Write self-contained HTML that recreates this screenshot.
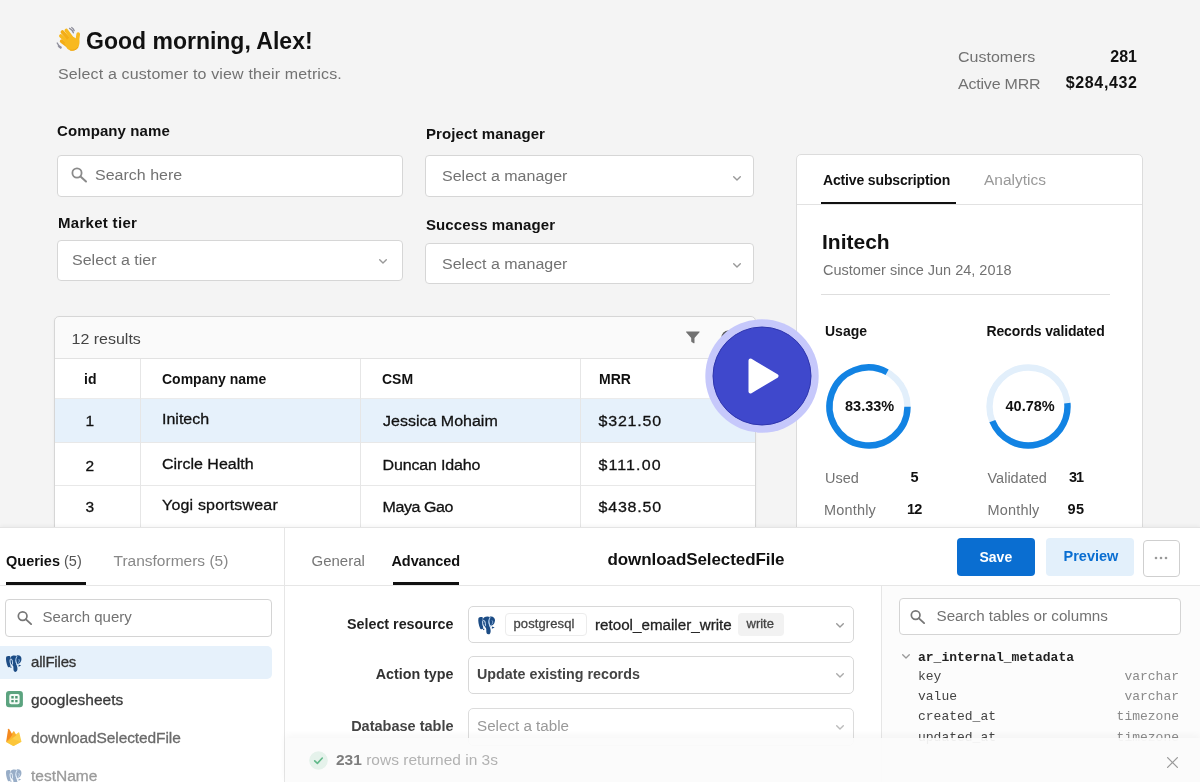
<!DOCTYPE html>
<html lang="en">
<head>
<meta charset="utf-8">
<title>Dashboard</title>
<style>
*{box-sizing:border-box;margin:0;padding:0}
html,body{width:1200px;height:782px;overflow:hidden}
body{background:#f4f4f4;font-family:"Liberation Sans",sans-serif;color:#111;position:relative}
/* .a : absolutely placed text, "top" is the BASELINE y */
.a{position:absolute;white-space:nowrap;line-height:1;margin-top:-.8465em;font-size:16px}
.a:not(.b):not(.m){transform:scaleY(.96);transform-origin:0 .8465em}
.a.tc{transform:scaleY(.87)}
.a.s93{transform:scaleY(.93)}
.b{font-weight:bold}
.g{color:#727272}
.md{-webkit-text-stroke:.3px currentColor}
.m{font-family:"Liberation Mono",monospace;font-size:13px;margin-top:-.7665em}
.box{position:absolute;background:#fff;border:1px solid #d6d6d6;border-radius:4px}
.ln{position:absolute;background:#e4e4e4}
svg{position:absolute;overflow:visible}
</style>
</head>
<body>
<div id="root" style="position:absolute;left:0;top:0;width:1200px;height:782px;will-change:transform">

<!-- ============ HEADER ============ -->
<svg id="wave" aria-label="waving hand" style="left:50px;top:22px" width="40" height="34" viewBox="0 0 40 34">
  <g stroke-linecap="round" fill="none" stroke-width="3.700">
    <path d="M11.700 19.200L18 24" stroke="#f3ad16"/>
    <path d="M10.900 14L19 21.500" stroke="#f8b91f"/>
    <path d="M12.400 10L21 19.500" stroke="#f3ad16"/>
    <path d="M16.300 8.500L23 17.500" stroke="#f8b91f"/>
    <path d="M28.200 12.200L27 21" stroke="#f8b91f"/>
  </g>
  <path d="M14.500 21.500C17 16 22 13.500 24.500 15.500c1.500 1.200 2.500 1 4 .5 1.500 2.500 1.500 7-1 10.500-3 3-7.500 2.600-10.200.2Z" fill="#f8b91f"/>
  <path d="M20.500 28.200c3 .6 6-.6 7.500-3" stroke="#eea512" stroke-width="1" fill="none" stroke-linecap="round"/>
  <g stroke="#8f8f9c" stroke-width="1.300" fill="none" stroke-linecap="round">
    <path d="M19.600 6.400c1.900 1 3.200 2.500 3.800 4.400M21.700 5.500c1.300.8 2.100 1.900 2.500 3.200"/>
    <path d="M7.200 21c.8 2 2.200 3.400 4.100 4.300M8.300 24c.6 1 1.400 1.700 2.500 2.200"/>
  </g>
</svg>
<div class="a b" id="title" style="left:86px;top:49.300px;font-size:23px">Good morning, Alex!</div>
<div class="a g s93" id="sub" style="left:58px;top:79.500px;letter-spacing:.14px">Select a customer to view their metrics.</div>

<div class="a g" id="cust" style="left:958px;top:63px">Customers</div>
<div class="a b" id="custv" style="right:63px;top:62.500px">281</div>
<div class="a g" id="mrr" style="left:958px;top:89.500px;letter-spacing:-.2px">Active MRR</div>
<div class="a b" id="mrrv" style="right:63px;top:89px;letter-spacing:.65px;margin-right:-.65px">$284,432</div>

<!-- ============ FILTERS ============ -->
<div class="a b" id="l1" style="left:57px;top:136px;font-size:15px;letter-spacing:.1px">Company name</div>
<div class="box" style="left:56.500px;top:155px;width:346px;height:41.500px"></div>
<svg style="left:71px;top:167px" width="17" height="16" viewBox="0 0 17 16"><circle cx="6" cy="6" r="4.600" fill="none" stroke="#8a8a8a" stroke-width="1.800"/><path d="M9.500 9.500L15 14.500" stroke="#8a8a8a" stroke-width="2" stroke-linecap="round"/></svg>
<div class="a g" id="p1" style="left:95px;top:180.500px">Search here</div>

<div class="a b" id="l2" style="left:58px;top:227.500px;font-size:15px;letter-spacing:.3px">Market tier</div>
<div class="box" style="left:56.500px;top:239.500px;width:346px;height:41px"></div>
<div class="a g" id="p2" style="left:72px;top:265.500px">Select a tier</div>
<svg class="chev" style="left:379px;top:259px" width="8" height="5" viewBox="0 0 8 5"><path d="M.7.7L4 4 7.300.7" fill="none" stroke="#999" stroke-width="1.400" stroke-linecap="round" stroke-linejoin="round"/></svg>

<div class="a b" id="l3" style="left:426px;top:139px;font-size:15px;letter-spacing:.1px">Project manager</div>
<div class="box" style="left:424.500px;top:155px;width:329px;height:41.500px"></div>
<div class="a g" id="p3" style="left:442px;top:182px">Select a manager</div>
<svg class="chev" style="left:733px;top:176px" width="8" height="5" viewBox="0 0 8 5"><path d="M.7.7L4 4 7.300.7" fill="none" stroke="#999" stroke-width="1.400" stroke-linecap="round" stroke-linejoin="round"/></svg>

<div class="a b" id="l4" style="left:426px;top:230px;font-size:15px;letter-spacing:.1px">Success manager</div>
<div class="box" style="left:424.500px;top:243px;width:329px;height:41px"></div>
<div class="a g" id="p4" style="left:442px;top:269.500px">Select a manager</div>
<svg class="chev" style="left:733px;top:263px" width="8" height="5" viewBox="0 0 8 5"><path d="M.7.7L4 4 7.300.7" fill="none" stroke="#999" stroke-width="1.400" stroke-linecap="round" stroke-linejoin="round"/></svg>

<!-- ============ TABLE ============ -->
<div class="box" id="tbl" style="left:54px;top:316px;width:702px;height:240px;background:#fafafa;border-color:#d6d6d6;border-radius:5px 5px 0 0;box-shadow:0 1px 3px rgba(0,0,0,.05)"></div>
<div id="tbody" style="position:absolute;left:55px;top:359px;width:700px;height:190px;background:#fff"></div>
<div id="rowsel" style="position:absolute;left:55px;top:399px;width:700px;height:43px;background:#e6f1fb"></div>
<div class="ln" style="left:55px;top:358px;width:700px;height:1px;background:#e2e2e2"></div>
<div class="ln" style="left:55px;top:398px;width:700px;height:1px;background:#ebebeb"></div>
<div class="ln" style="left:55px;top:442px;width:700px;height:1px;background:#e8e8e8"></div>
<div class="ln" style="left:55px;top:485px;width:700px;height:1px;background:#e8e8e8"></div>
<div class="ln" style="left:139.500px;top:359px;width:1px;height:180px;background:#e6e6e6"></div>
<div class="ln" style="left:360px;top:359px;width:1px;height:180px;background:#e6e6e6"></div>
<div class="ln" style="left:579.500px;top:359px;width:1px;height:180px;background:#e6e6e6"></div>

<div class="a" id="res" style="left:71.500px;top:344.500px;color:#444">12 results</div>
<svg id="filt" style="left:685.700px;top:330.800px" width="13.700" height="13.700" viewBox="0 0 15 15"><path d="M.6.5h13.800c.5 0 .7.500.4.900L9.300 7.600v5.300c0 .5-.5.800-.9.500L6.100 12a.8.800 0 0 1-.4-.7V7.600L.2 1.400C-.1 1 .1.500.6.500Z" fill="#727272"/></svg>
<svg id="dl" style="left:720.500px;top:330px" width="14.500" height="14.500" viewBox="0 0 16 16"><circle cx="8" cy="8" r="7.500" fill="#555"/></svg>

<div class="a b" id="h1" style="left:84px;top:383.500px;font-size:14px">id</div>
<div class="a b" id="h2" style="left:162px;top:383.500px;font-size:14px">Company name</div>
<div class="a b" id="h3" style="left:382px;top:383.500px;font-size:14px">CSM</div>
<div class="a b" id="h4" style="left:599px;top:383.500px;font-size:14px">MRR</div>

<div class="a md tc" id="r1a" style="left:85.500px;top:426.500px;font-size:15.500px">1</div>
<div class="a md tc" id="r1b" style="left:162px;top:425px">Initech</div>
<div class="a md tc" id="r1c" style="left:383px;top:426.500px">Jessica Mohaim</div>
<div class="a md tc" id="r1d" style="left:598.500px;top:426.500px;letter-spacing:.8px">$321.50</div>

<div class="a md tc" id="r2a" style="left:85.500px;top:471px;font-size:15.500px">2</div>
<div class="a md tc" id="r2b" style="left:162px;top:469.500px">Circle Health</div>
<div class="a md tc" id="r2c" style="left:382.500px;top:471px;letter-spacing:-.15px">Duncan Idaho</div>
<div class="a md tc" id="r2d" style="left:598.500px;top:471px;letter-spacing:1.100px">$111.00</div>

<div class="a md tc" id="r3a" style="left:85.500px;top:512.500px;font-size:15.500px">3</div>
<div class="a md tc" id="r3b" style="left:162px;top:511px;letter-spacing:.18px">Yogi sportswear</div>
<div class="a md tc" id="r3c" style="left:382.500px;top:512.500px;letter-spacing:-.4px">Maya Gao</div>
<div class="a md tc" id="r3d" style="left:598.500px;top:512.500px;letter-spacing:.8px">$438.50</div>

<!-- ============ RIGHT PANEL ============ -->
<div class="box" id="rp" style="left:796px;top:153.500px;width:346.500px;height:400px;border-color:#dcdcdc;border-radius:5px 5px 0 0"></div>
<div class="ln" style="left:797px;top:203.500px;width:345px;height:1px;background:#e2e2e2"></div>
<div class="ln" style="left:820.500px;top:201.500px;width:135.500px;height:2.500px;background:#111"></div>
<div class="a b" id="t1" style="left:823px;top:185.300px;font-size:14px;letter-spacing:-.15px">Active subscription</div>
<div class="a" id="t2" style="left:984px;top:185.300px;font-size:15.500px;color:#999">Analytics</div>
<div class="a b" id="co" style="left:822px;top:248.600px;font-size:21px">Initech</div>
<div class="a g s93" id="since" style="left:823px;top:275.500px;font-size:14.500px">Customer since Jun 24, 2018</div>
<div class="ln" style="left:821px;top:294px;width:289px;height:1px;background:#dedede"></div>
<div class="a b" id="u1" style="left:825px;top:335.700px;font-size:14px">Usage</div>
<div class="a b" id="u2" style="left:986.500px;top:335.700px;font-size:14px;letter-spacing:-.15px">Records validated</div>

<svg id="d1" style="left:826px;top:363.800px" width="85" height="85" viewBox="-42.500 -42.500 85 85">
  <circle r="39" fill="none" stroke="#e2effb" stroke-width="6.400"/>
  <path d="M39 .3A39 39 0 1 1 18.610 -34.270" fill="none" stroke="#1283e3" stroke-width="6.400"/>
</svg>
<svg id="d2" style="left:986.200px;top:364.200px" width="85" height="85" viewBox="-42.500 -42.500 85 85">
  <circle r="39" fill="none" stroke="#e2effb" stroke-width="6.400"/>
  <path d="M38.850 -3.400A39 39 0 0 1 -36.160 14.610" fill="none" stroke="#1283e3" stroke-width="6.400"/>
</svg>
<div class="a b" id="pc1" style="left:845px;top:411px;font-size:14.500px">83.33%</div>
<div class="a b" id="pc2" style="left:1005.500px;top:411px;font-size:14.500px">40.78%</div>

<div class="a g" id="s1" style="left:825px;top:483.200px;font-size:14.500px">Used</div>
<div class="a b" id="s2" style="left:910.500px;top:482px;font-size:14.500px">5</div>
<div class="a g" id="s3" style="left:987.500px;top:483.200px;font-size:14.500px">Validated</div>
<div class="a b" id="s4" style="left:1069px;top:482px;font-size:14.500px;letter-spacing:-1px">31</div>
<div class="a g" id="s5" style="left:824px;top:515.200px;font-size:14.500px;letter-spacing:.18px">Monthly</div>
<div class="a b" id="s6" style="left:907px;top:514px;font-size:14.500px;letter-spacing:-.7px">12</div>
<div class="a g" id="s7" style="left:987.500px;top:515.200px;font-size:14.500px;letter-spacing:.18px">Monthly</div>
<div class="a b" id="s8" style="left:1067.500px;top:514px;font-size:14.500px;letter-spacing:.4px">95</div>

<!-- ============ BOTTOM PANEL ============ -->
<div id="bp" style="position:absolute;left:0;top:527px;width:1200px;height:255px;background:#fff;border-top:1px solid #e4e4e4;box-shadow:0 -1px 4px rgba(0,0,0,.05)"></div>
<div id="bpr" style="position:absolute;left:882px;top:586px;width:318px;height:196px;background:#fcfcfc"></div>
<div class="ln" style="left:0;top:585px;width:1200px;height:1px;background:#e6e6e6"></div>
<div class="ln" style="left:284px;top:528px;width:1px;height:254px;background:#e6e6e6"></div>
<div class="ln" style="left:881px;top:586px;width:1px;height:196px;background:#e6e6e6"></div>

<!-- left tabs -->
<div class="a" id="q1" style="left:6px;top:566px;font-size:14.500px;color:#555"><span class="b" style="color:#111">Queries</span> (5)</div>
<div class="a" id="q2" style="left:113.500px;top:566px;font-size:15.500px;color:#888">Transformers (5)</div>
<div class="ln" style="left:6px;top:581.500px;width:79.500px;height:3px;background:#111"></div>

<div class="box" style="left:4.500px;top:599px;width:267px;height:37.500px;border-color:#d4d4d4"></div>
<svg style="left:17px;top:610px" width="16" height="16" viewBox="0 0 17 16"><circle cx="6" cy="6" r="4.600" fill="none" stroke="#777" stroke-width="1.800"/><path d="M9.500 9.500L15 14.500" stroke="#777" stroke-width="2" stroke-linecap="round"/></svg>
<div class="a g s93" id="sq" style="left:42.500px;top:622px;font-size:15px">Search query</div>

<div id="qsel" style="position:absolute;left:0;top:645.500px;width:271.500px;height:33px;background:#e6f1fb;border-radius:0 5px 5px 0"></div>
<svg id="pg1" style="left:4.8px;top:654.5px;opacity:1" width="17.2" height="17" viewBox="-0.2 -0.3 17.200 18.600">
  <path d="M.3 1.600C1.300.5 3.600.5 4.700 1.200 4.300 4.500 4.400 8.500 5.200 12.200 4.300 13.300 2.800 13.300 2.100 12.500.5 9-.4 4.300.3 1.600Z" fill="#1c4c85"/>
  <path d="M5 2.300C6.200-.1 10.300-.5 12.200 1.200 11 3.500 10.700 6 11 8.500c.5 2 1.400 3.500 1.600 5.500.2 2.700-.6 4.200-2.300 4.200-1.700 0-2.200-1.800-2.100-4.200.1-1.800-.4-2.800-1.400-3.300C4.600 9.600 4 5 5 2.300Z" fill="#1c4c85"/>
  <path d="M11.800.3c2.800-.9 5.400 1.200 5.200 4-.2 2.300-1.300 4-2.600 4.700l-1.900.6C10.700 7 10.800 3.300 11.800.3Z" fill="#1c4c85"/>
  <path d="M13.900 10.200l2.800 1.100-2.900 1.300ZM4.500 12.400l2.300.4-1.700 1.200Z" fill="#1c4c85"/>
  <ellipse cx="5.900" cy="7.300" rx="1.350" ry="3.300" fill="none" stroke="#d3e4f6" stroke-width=".95" transform="rotate(-8 5.900 7.300)"/>
  <path d="M12.200 1C10.400 3.800 10.300 6.300 11.300 8.300c.5 1 1.100 1.900 1.500 2.900" fill="none" stroke="#b3d2f2" stroke-width="1.050"/>
  <path d="M14 4.200c1 .9.900 2.800-.3 4" fill="none" stroke="#9dbfe6" stroke-width=".9"/>
</svg>
<div class="a md" id="qa" style="left:31px;top:667px;font-size:15px;letter-spacing:-.2px;color:#333">allFiles</div>
<svg id="gs" style="left:5.800px;top:690.800px" width="17" height="16.500" viewBox="0 0 17 16.500"><rect x="0" y="0" width="16.900" height="16.300" rx="3" fill="#5ba37f"/><rect x="3.300" y="3.100" width="10.300" height="10.200" rx="1.800" fill="#f4faf6"/><path d="M5.300 5.100h2.400v2.300H5.300zM9.200 5.100h2.400v2.300H9.200zM5.300 9h2.400v2.300H5.300zM9.200 9h2.400v2.300H9.200z" fill="#4e9873"/></svg>
<div class="a md" id="qb" style="left:31px;top:705px;font-size:15.500px;color:#3a3a3a">googlesheets</div>
<svg id="fb" style="left:5.500px;top:728px" width="16" height="19" viewBox="0 0 16 19"><path d="M.1 14L12.300 4.400c.4-.3.900-.1 1 .4l2.200 8.900-7.300 4c-.5.300-1.100.3-1.600 0Z" fill="#fdcf4a"/><path d="M.1 14L7.100 3.700c.3-.5 1-.5 1.300 0l2 3.500L3.500 12.500Z" fill="#fbb02d"/><path d="M.1 14L2.100 1.300c.1-.6.800-.7 1.100-.2l3.200 5.400-2.400 4Z" fill="#f4891f"/><path d="M.1 14L6 8l1.500 3.200 7.900 2.500-6.900 3.800c-.5.300-1.100.3-1.600 0Z" fill="#fbc02d" opacity=".55"/></svg>
<div class="a md" id="qc" style="left:31px;top:742.800px;font-size:15.500px;letter-spacing:-.1px;color:#6a6a6a">downloadSelectedFile</div>
<svg id="pg2" style="left:4.8px;top:768.5px;opacity:0.45" width="17.2" height="17" viewBox="-0.2 -0.3 17.200 18.600">
  <path d="M.3 1.600C1.300.5 3.600.5 4.700 1.200 4.300 4.500 4.400 8.500 5.200 12.200 4.300 13.300 2.800 13.300 2.100 12.500.5 9-.4 4.300.3 1.600Z" fill="#1c4c85"/>
  <path d="M5 2.300C6.200-.1 10.300-.5 12.200 1.200 11 3.500 10.700 6 11 8.500c.5 2 1.400 3.500 1.600 5.500.2 2.700-.6 4.200-2.300 4.200-1.700 0-2.200-1.800-2.100-4.200.1-1.800-.4-2.800-1.400-3.300C4.600 9.600 4 5 5 2.300Z" fill="#1c4c85"/>
  <path d="M11.800.3c2.800-.9 5.400 1.200 5.200 4-.2 2.300-1.300 4-2.600 4.700l-1.900.6C10.700 7 10.800 3.300 11.800.3Z" fill="#1c4c85"/>
  <path d="M13.900 10.200l2.800 1.100-2.900 1.300ZM4.500 12.400l2.300.4-1.700 1.200Z" fill="#1c4c85"/>
  <ellipse cx="5.900" cy="7.300" rx="1.350" ry="3.300" fill="none" stroke="#d3e4f6" stroke-width=".95" transform="rotate(-8 5.900 7.300)"/>
  <path d="M12.200 1C10.400 3.800 10.300 6.300 11.300 8.300c.5 1 1.100 1.900 1.500 2.900" fill="none" stroke="#b3d2f2" stroke-width="1.050"/>
  <path d="M14 4.200c1 .9.900 2.800-.3 4" fill="none" stroke="#9dbfe6" stroke-width=".9"/>
</svg>
<div class="a md" id="qd" style="left:31px;top:780.800px;font-size:15.500px;color:#9a9a9a">testName</div>

<!-- middle -->
<div class="a" id="m1" style="left:311.500px;top:566px;font-size:15px;color:#777">General</div>
<div class="a b" id="m2" style="left:391.500px;top:566px;font-size:14.500px;letter-spacing:-.1px">Advanced</div>
<div class="ln" style="left:392.500px;top:582px;width:66.500px;height:3px;background:#111"></div>
<div class="a b" id="qn" style="left:607.500px;top:565.200px;font-size:17px;letter-spacing:-.08px">downloadSelectedFile</div>

<div id="sv" style="position:absolute;left:957px;top:538px;width:78px;height:38px;background:#0a6ed1;border-radius:4px"></div>
<div class="a b" id="svt" style="left:979.500px;top:561.500px;font-size:14px;color:#fff">Save</div>
<div id="pv" style="position:absolute;left:1046px;top:538px;width:88px;height:38px;background:#e3f0fb;border-radius:4px"></div>
<div class="a b" id="pvt" style="left:1063.500px;top:561.500px;font-size:14.500px;color:#0a6ed1">Preview</div>
<div class="box" id="mo" style="left:1142.500px;top:539.500px;width:37px;height:37px;border:1.500px solid #cfcfcf;border-radius:4px"></div>
<svg style="left:1154px;top:555.500px" width="14" height="4" viewBox="0 0 14 4"><circle cx="2" cy="2" r="1.300" fill="#999"/><circle cx="7" cy="2" r="1.300" fill="#999"/><circle cx="12" cy="2" r="1.300" fill="#999"/></svg>

<div class="a b" id="f1" style="right:746.500px;top:629.300px;font-size:14.300px;color:#222">Select resource</div>
<div class="box" id="fb1" style="left:467.500px;top:606px;width:386px;height:37px;border-color:#d8d8d8;border-radius:5px"></div>
<svg id="pg3" style="left:478.2px;top:615.8px;opacity:1" width="17" height="18.4" viewBox="-0.2 -0.3 17.200 18.600">
  <path d="M.3 1.600C1.300.5 3.600.5 4.700 1.200 4.300 4.500 4.400 8.500 5.200 12.200 4.300 13.300 2.800 13.300 2.100 12.500.5 9-.4 4.300.3 1.600Z" fill="#1c4c85"/>
  <path d="M5 2.300C6.200-.1 10.300-.5 12.200 1.200 11 3.500 10.700 6 11 8.500c.5 2 1.400 3.500 1.600 5.500.2 2.700-.6 4.200-2.300 4.200-1.700 0-2.200-1.800-2.100-4.200.1-1.800-.4-2.800-1.400-3.300C4.600 9.600 4 5 5 2.300Z" fill="#1c4c85"/>
  <path d="M11.800.3c2.800-.9 5.400 1.200 5.200 4-.2 2.300-1.300 4-2.600 4.700l-1.900.6C10.700 7 10.800 3.300 11.800.3Z" fill="#1c4c85"/>
  <path d="M13.900 10.200l2.800 1.100-2.900 1.300ZM4.500 12.400l2.300.4-1.700 1.200Z" fill="#1c4c85"/>
  <ellipse cx="5.900" cy="7.300" rx="1.350" ry="3.300" fill="none" stroke="#d3e4f6" stroke-width=".95" transform="rotate(-8 5.900 7.300)"/>
  <path d="M12.200 1C10.400 3.800 10.300 6.300 11.300 8.300c.5 1 1.100 1.900 1.500 2.900" fill="none" stroke="#b3d2f2" stroke-width="1.050"/>
  <path d="M14 4.200c1 .9.900 2.800-.3 4" fill="none" stroke="#9dbfe6" stroke-width=".9"/>
</svg>
<div class="box" style="left:504.500px;top:613px;width:82px;height:22.500px;border-color:#ececec;border-radius:4px"></div>
<div class="a md" id="bd1" style="left:513.500px;top:627.700px;font-size:13px;letter-spacing:.1px;color:#444">postgresql</div>
<div class="a md" id="rn" style="left:595px;top:629.600px;color:#222;font-size:15.200px">retool_emailer_write</div>
<div style="position:absolute;left:737.500px;top:613px;width:46px;height:22.500px;background:#f2f2f2;border-radius:4px"></div>
<div class="a md" id="bd2" style="left:746.500px;top:627.700px;font-size:13px;color:#444">write</div>
<svg style="left:836px;top:623px" width="8" height="5" viewBox="0 0 8 5"><path d="M.7.7L4 4 7.300.7" fill="none" stroke="#999" stroke-width="1.400" stroke-linecap="round" stroke-linejoin="round"/></svg>

<div class="a b" id="f2" style="right:746.500px;top:679.500px;font-size:14.300px;color:#333">Action type</div>
<div class="box" id="fb2" style="left:467.500px;top:656px;width:386px;height:37.500px;border-color:#d8d8d8;border-radius:5px"></div>
<div class="a b" id="at" style="left:477px;top:679.500px;font-size:14.300px;color:#444">Update existing records</div>
<svg style="left:836px;top:673px" width="8" height="5" viewBox="0 0 8 5"><path d="M.7.7L4 4 7.300.7" fill="none" stroke="#aaa" stroke-width="1.400" stroke-linecap="round" stroke-linejoin="round"/></svg>

<div class="a b" id="f3" style="right:746.500px;top:731px;font-size:14.500px;color:#444">Database table</div>
<div class="box" id="fb3" style="left:467.500px;top:708px;width:386px;height:37.500px;border-color:#dcdcdc;border-radius:5px"></div>
<div class="a" id="dt" style="left:477px;top:731px;font-size:15.200px;color:#999">Select a table</div>
<svg style="left:836px;top:725px" width="8" height="5" viewBox="0 0 8 5"><path d="M.7.7L4 4 7.300.7" fill="none" stroke="#bbb" stroke-width="1.400" stroke-linecap="round" stroke-linejoin="round"/></svg>

<!-- right schema -->
<div class="box" style="left:899px;top:597.500px;width:282px;height:37.500px;border-color:#d4d4d4"></div>
<svg style="left:909.500px;top:608.500px" width="16" height="16" viewBox="0 0 17 16"><circle cx="6" cy="6" r="4.600" fill="none" stroke="#777" stroke-width="1.800"/><path d="M9.500 9.500L15 14.500" stroke="#777" stroke-width="2" stroke-linecap="round"/></svg>
<div class="a g s93" id="st" style="left:936.500px;top:620.500px;font-size:15.200px">Search tables or columns</div>
<svg style="left:901.500px;top:654px" width="8" height="5" viewBox="0 0 8 5"><path d="M.7.7L4 4 7.300.7" fill="none" stroke="#999" stroke-width="1.300" stroke-linecap="round" stroke-linejoin="round"/></svg>
<div class="a m b" id="sc0" style="left:918px;top:660.800px;color:#222">ar_internal_metadata</div>
<div class="a m" id="sc1" style="left:918px;top:680.200px;color:#444">key</div>
<div class="a m" style="right:21px;top:680.200px;color:#8a8a8a">varchar</div>
<div class="a m" id="sc2" style="left:918px;top:700.300px;color:#444">value</div>
<div class="a m" style="right:21px;top:700.300px;color:#8a8a8a">varchar</div>
<div class="a m" id="sc3" style="left:918px;top:720.400px;color:#444">created_at</div>
<div class="a m" style="right:21px;top:720.400px;color:#8a8a8a">timezone</div>
<div class="a m" id="sc4" style="left:918px;top:740.600px;color:#444">updated_at</div>
<div class="a m" style="right:21px;top:740.600px;color:#8a8a8a">timezone</div>

<!-- status bar -->
<div id="sb" style="position:absolute;left:285px;top:738px;width:915px;height:44px;background:rgba(251,251,251,.93);box-shadow:0 -3px 7px rgba(0,0,0,.035)"></div>
<svg style="left:308.500px;top:751px" width="19" height="19" viewBox="0 0 19 19"><circle cx="9.500" cy="9.500" r="9.300" fill="#e5f2eb"/><path d="M5.700 9.800l2.700 2.600 4.900-5.400" fill="none" stroke="#62b98a" stroke-width="1.600" stroke-linecap="round" stroke-linejoin="round"/></svg>
<div class="a" id="sbt" style="left:336px;top:765.200px;font-size:15.500px;color:#b2b2b2"><span class="b" style="color:#7d7d7d">231</span> rows returned in 3s</div>
<svg style="left:1166.500px;top:756.500px" width="11" height="11" viewBox="0 0 11 11"><path d="M.6.600l9.800 9.800M10.400.600L.6 10.400" stroke="#9a9a9a" stroke-width="1.300" stroke-linecap="round"/></svg>

<!-- ============ PLAY BUTTON ============ -->
<svg id="play" style="left:705px;top:318.500px" width="114" height="114" viewBox="-57 -57 114 114">
  <circle r="56.700" fill="#c6c8fb"/>
  <circle r="49" fill="#3f48cc" stroke="#2e35ad" stroke-width="1"/>
  <path d="M-11.500 -15.500L14.500 0L-11.500 15.500Z" fill="#fff" stroke="#fff" stroke-width="4" stroke-linejoin="round"/>
</svg>

<!--PLAY-->

</div>
</body>
</html>
